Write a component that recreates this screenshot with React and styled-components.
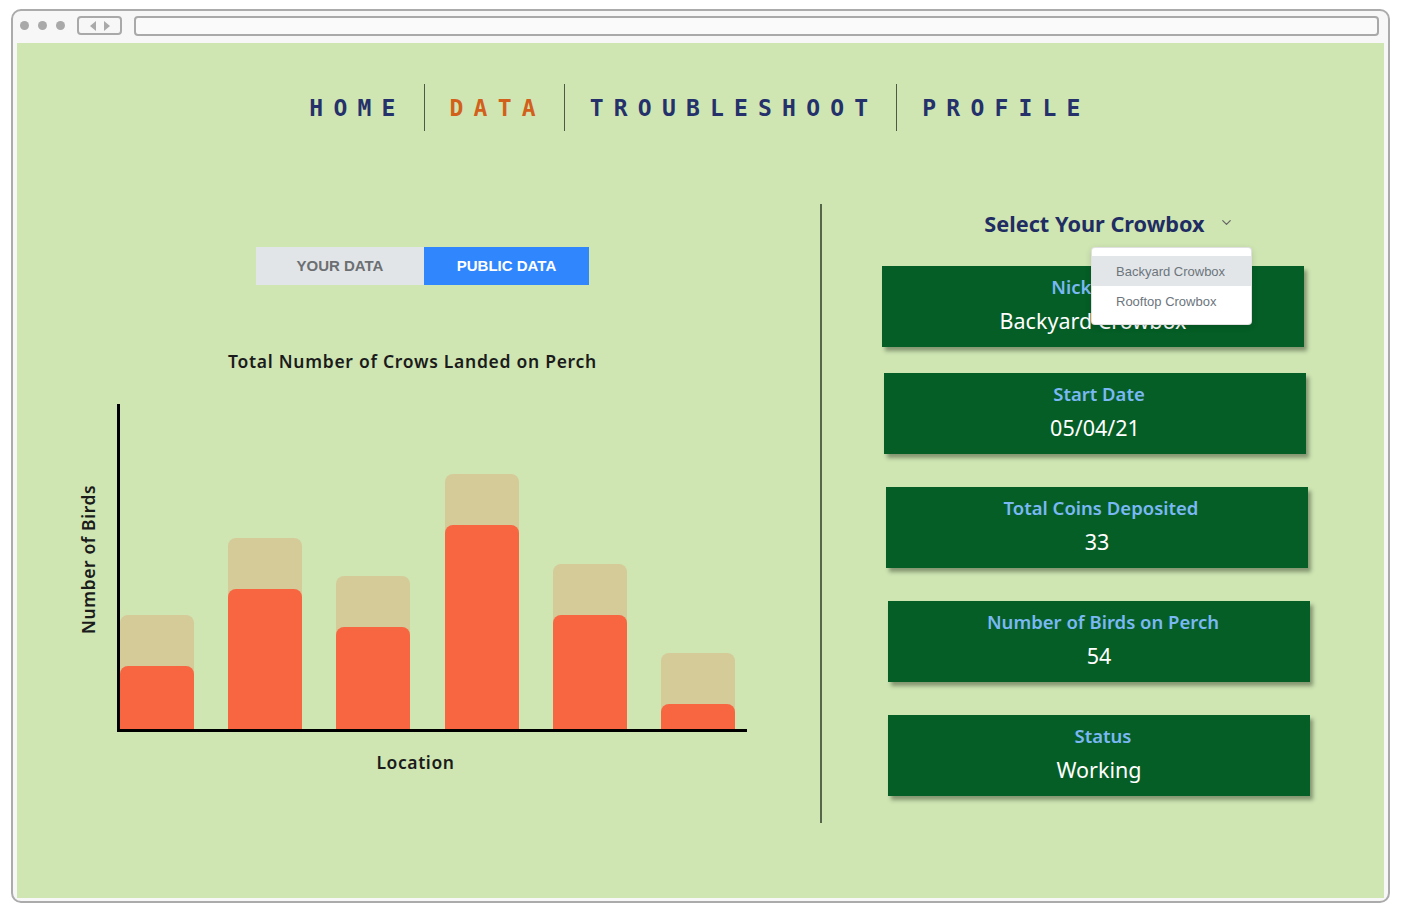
import styled, { createGlobalStyle } from "styled-components";
import { ChevronDown } from "lucide-react";

const bars = [
  { total: 114, landed: 63 },
  { total: 191, landed: 140 },
  { total: 153, landed: 102 },
  { total: 255, landed: 204 },
  { total: 165, landed: 114 },
  { total: 76, landed: 25 },
];

const cards = [
  { label: "Nickname", value: "Backyard Crowbox", nudge: 0, gap: 26 },
  { label: "Start Date", value: "05/04/21", nudge: 2, gap: 33 },
  { label: "Total Coins Deposited", value: "33", nudge: 4, gap: 33 },
  { label: "Number of Birds on Perch", value: "54", nudge: 6, gap: 33 },
  { label: "Status", value: "Working", nudge: 6, gap: 0 },
];

const navItems = ["HOME", "DATA", "TROUBLESHOOT", "PROFILE"];

const App = () => {
  return (
    <>
      <GlobalStyle />
      <Frame>
        <TopBar>
          <Dots>
            <Dot />
            <Dot />
            <Dot />
          </Dots>
          <NavButtons>
            <Arrow $dir="left" />
            <Arrow $dir="right" />
          </NavButtons>
          <UrlBar />
        </TopBar>
        <Page>
          <Nav>
            {navItems.map((item) => (
              <NavItem key={item} $active={item === "DATA"}>
                {item}
              </NavItem>
            ))}
          </Nav>
          <Main>
            <LeftPanel>
              <Toggle>
                <ToggleButton>YOUR DATA</ToggleButton>
                <ToggleButton $active>PUBLIC DATA</ToggleButton>
              </Toggle>
              <ChartTitle>Total Number of Crows Landed on Perch</ChartTitle>
              <Chart>
                <YLabel>Number of Birds</YLabel>
                <Plot>
                  {bars.map((b, i) => (
                    <BarSlot key={i}>
                      <TotalBar style={{ height: b.total }}>
                        <LandedBar style={{ height: b.landed }} />
                      </TotalBar>
                    </BarSlot>
                  ))}
                </Plot>
              </Chart>
              <XLabel>Location</XLabel>
            </LeftPanel>
            <Divider />
            <RightPanel>
              <SelectHeader>
                Select Your Crowbox
                <ChevronDown size={15} color="#666" strokeWidth={2} />
              </SelectHeader>
              <Menu>
                <MenuItem $hover>Backyard Crowbox</MenuItem>
                <MenuItem>Rooftop Crowbox</MenuItem>
              </Menu>
              <Cards>
                {cards.map((c) => (
                  <Card key={c.label} $nudge={c.nudge} $gap={c.gap}>
                    <CardLabel>{c.label}</CardLabel>
                    <CardValue>{c.value}</CardValue>
                  </Card>
                ))}
              </Cards>
            </RightPanel>
          </Main>
        </Page>
      </Frame>
    </>
  );
};

const GlobalStyle = createGlobalStyle`
  html, body {
    margin: 0;
    padding: 0;
    background: #ffffff;
  }
  body {
    font-family: "Noto Sans", "Liberation Sans", sans-serif;
  }
`;

const Frame = styled.div`
  margin: 9px 0 0 11px;
  width: 1379px;
  height: 894px;
  box-sizing: border-box;
  border: 2px solid #ababab;
  border-radius: 10px;
  background: #f7f7f7;
  display: flex;
  flex-direction: column;
  padding: 0 4px 3px 4px;
`;

const TopBar = styled.div`
  height: 32px;
  display: flex;
  align-items: center;
  padding: 0 5px 0 2px;
  box-sizing: border-box;
`;

const Dots = styled.div`
  display: flex;
  gap: 9px;
  margin-left: 1px;
  margin-top: -4px;
`;

const Dot = styled.span`
  width: 9px;
  height: 9px;
  border-radius: 50%;
  background: #a9a9a9;
`;

const NavButtons = styled.div`
  margin-left: 12px;
  margin-top: -3px;
  width: 45px;
  height: 19px;
  box-sizing: border-box;
  border: 2px solid #a9a9a9;
  border-radius: 4px;
  display: flex;
  align-items: center;
  justify-content: center;
  gap: 8px;
`;

const Arrow = styled.span`
  width: 0;
  height: 0;
  border-top: 5px solid transparent;
  border-bottom: 5px solid transparent;
  ${(p) =>
    p.$dir === "left"
      ? "border-right: 6px solid #a9a9a9;"
      : "border-left: 6px solid #a9a9a9;"}
`;

const UrlBar = styled.div`
  margin-left: 12px;
  margin-top: -3px;
  flex: 1;
  height: 20px;
  box-sizing: border-box;
  border: 2px solid #a9a9a9;
  border-radius: 4px;
  background: #fafafa;
`;

const Page = styled.div`
  flex: 1;
  background: #cfe6b3;
  display: flex;
  flex-direction: column;
  padding-top: 41px;
`;

const Nav = styled.nav`
  display: flex;
  justify-content: center;
  margin-left: -8px;
`;

const NavItem = styled.div`
  height: 47px;
  display: flex;
  align-items: center;
  padding: 0 18px 0 25px;
  font-family: "DejaVu Sans Mono", "Liberation Mono", monospace;
  font-weight: 700;
  font-size: 23px;
  letter-spacing: 10.2px;
  color: ${(p) => (p.$active ? "#d2601b" : "#25316b")};
  & + & {
    border-left: 1px solid #4d5a45;
  }
`;

const Main = styled.div`
  margin-top: 73px;
  display: flex;
  height: 619px;
`;

const LeftPanel = styled.div`
  width: 803px;
  display: flex;
  flex-direction: column;
  align-items: center;
  padding-top: 43px;
  box-sizing: border-box;
`;

const Toggle = styled.div`
  display: flex;
  margin-left: 8px;
`;

const ToggleButton = styled.div`
  height: 38px;
  width: ${(p) => (p.$active ? "165px" : "168px")};
  display: flex;
  align-items: center;
  justify-content: center;
  padding-bottom: 1px;
  box-sizing: border-box;
  font-family: "Liberation Sans", Arial, sans-serif;
  font-weight: 700;
  font-size: 15px;
  color: ${(p) => (p.$active ? "#ffffff" : "#6c6f72")};
  background: ${(p) => (p.$active ? "#3087fd" : "#e2e5e8")};
`;

const ChartTitle = styled.div`
  margin-top: 64px;
  font-family: "Noto Sans", sans-serif;
  font-weight: 600;
  font-size: 17.5px;
  letter-spacing: 0.72px;
  line-height: 24px;
  color: #1b1b1b;
  margin-left: -12px;
`;

const Chart = styled.div`
  margin-top: 31px;
  align-self: flex-start;
  margin-left: 60px;
  display: flex;
`;

const YLabel = styled.div`
  width: 22px;
  margin-right: 18px;
  display: flex;
  align-items: center;
  justify-content: center;
  writing-mode: vertical-rl;
  transform: rotate(180deg);
  font-family: "Noto Sans", sans-serif;
  font-weight: 600;
  font-size: 17.5px;
  letter-spacing: 0.6px;
  color: #1b1b1b;
  padding-top: 18px;
  box-sizing: border-box;
  white-space: nowrap;
`;

const Plot = styled.div`
  width: 630px;
  height: 328px;
  box-sizing: border-box;
  border-left: 3px solid #000;
  border-bottom: 3px solid #000;
  display: flex;
  align-items: flex-end;
  justify-content: space-between;
  padding-right: 12px;
`;

const BarSlot = styled.div`
  width: 74px;
  display: flex;
  align-items: flex-end;
`;

const TotalBar = styled.div`
  width: 100%;
  background: #d5cb99;
  border-radius: 8px 8px 0 0;
  display: flex;
  align-items: flex-end;
`;

const LandedBar = styled.div`
  width: 100%;
  background: #f76641;
  border-radius: 8px 8px 0 0;
`;

const XLabel = styled.div`
  margin-top: 18px;
  font-family: "Noto Sans", sans-serif;
  font-weight: 600;
  font-size: 17.5px;
  letter-spacing: 0.6px;
  color: #1b1b1b;
  margin-left: -6px;
`;

const Divider = styled.div`
  width: 2px;
  background: #56664b;
`;

const RightPanel = styled.div`
  position: relative;
  flex: 1;
  padding-top: 5px;
  box-sizing: border-box;
`;

const SelectHeader = styled.div`
  display: flex;
  align-items: center;
  justify-content: center;
  gap: 14px;
  height: 28px;
  margin-left: 12px;
  font-family: "Noto Sans", sans-serif;
  font-weight: 700;
  font-size: 21.7px;
  color: #1f2d62;
  svg {
    margin-top: -2px;
  }
`;

const Menu = styled.div`
  position: absolute;
  top: 43px;
  left: 269px;
  width: 161px;
  padding: 8px 0;
  box-sizing: border-box;
  background: #ffffff;
  border: 1px solid rgba(0, 0, 0, 0.12);
  border-radius: 4px;
  box-shadow: 0 2px 6px rgba(0, 0, 0, 0.15);
  z-index: 2;
`;

const MenuItem = styled.div`
  height: 30px;
  display: flex;
  align-items: center;
  padding-left: 24px;
  font-family: "Liberation Sans", Arial, sans-serif;
  font-size: 13px;
  color: #6c757d;
  background: ${(p) => (p.$hover ? "#e3e6e8" : "transparent")};
`;

const Cards = styled.div`
  margin-top: 29px;
  padding-left: 60px;
  display: flex;
  flex-direction: column;
`;

const Card = styled.div`
  width: 422px;
  height: 81px;
  margin-left: ${(p) => p.$nudge}px;
  margin-bottom: ${(p) => p.$gap}px;
  box-sizing: border-box;
  padding-top: 8px;
  background: #055e26;
  box-shadow: 3px 4px 4px rgba(40, 50, 30, 0.45);
  display: flex;
  flex-direction: column;
  align-items: center;
`;

const CardLabel = styled.div`
  padding-left: 8px;
  line-height: 26px;
  font-family: "Noto Sans", sans-serif;
  font-weight: 600;
  font-size: 18.5px;
  color: #7ab8f3;
`;

const CardValue = styled.div`
  margin-top: 6px;
  line-height: 30px;
  font-family: "Noto Sans", sans-serif;
  font-size: 21.5px;
  color: #ffffff;
`;

export default App;
